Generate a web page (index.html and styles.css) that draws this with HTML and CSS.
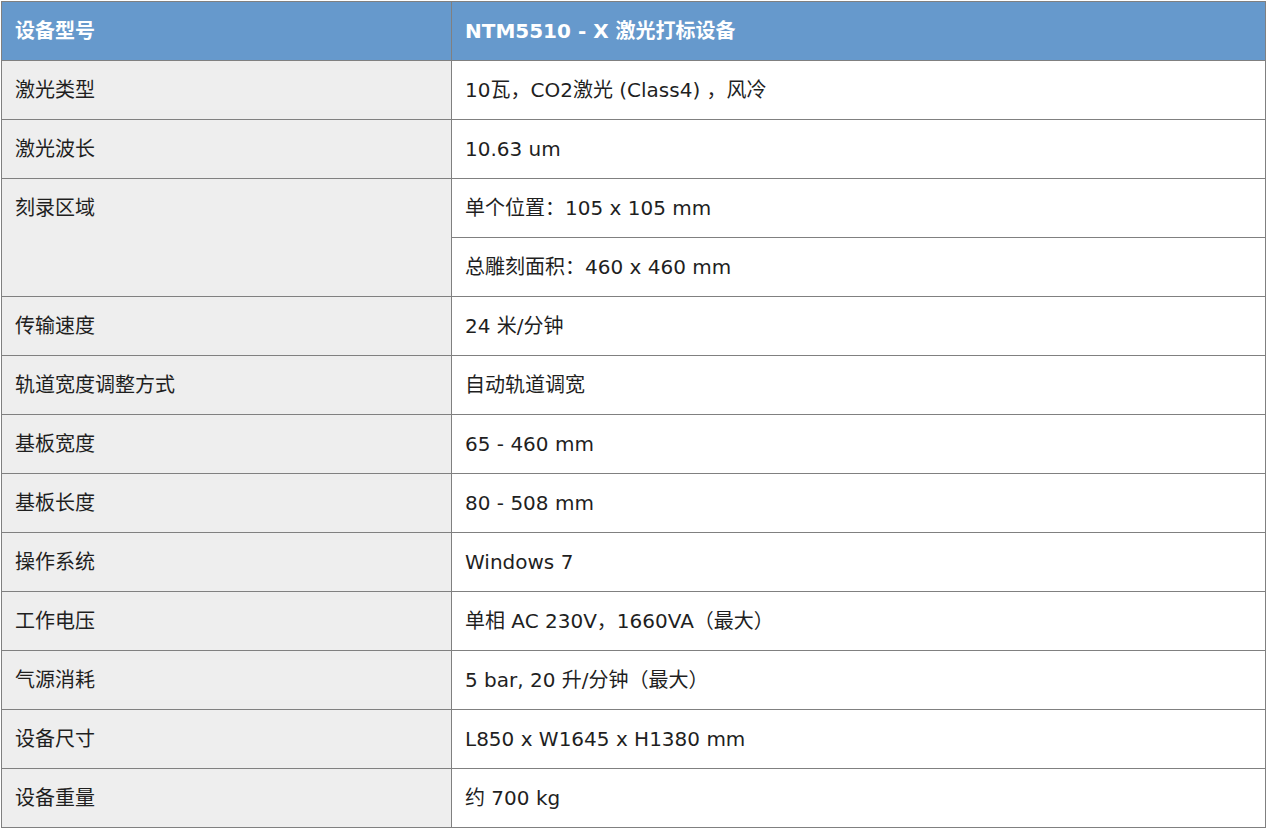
FILE: index.html
```html
<!DOCTYPE html>
<html lang="zh-CN">
<head>
<meta charset="utf-8">
<title>NTM5510 - X 激光打标设备</title>
<link rel="stylesheet" href="styles.css">
</head>
<body>
<div class="spec">
  <div class="cell head">设备型号</div>
  <div class="cell head">NTM5510 - X 激光打标设备</div>

  <div class="cell label">激光类型</div>
  <div class="cell value">10瓦，CO2激光 (Class4) ，风冷</div>

  <div class="cell label">激光波长</div>
  <div class="cell value">10.63 um</div>

  <div class="cell label span2">刻录区域</div>
  <div class="cell value">单个位置：105 x 105 mm</div>
  <div class="cell value">总雕刻面积：460 x 460 mm</div>

  <div class="cell label">传输速度</div>
  <div class="cell value">24 米/分钟</div>

  <div class="cell label">轨道宽度调整方式</div>
  <div class="cell value">自动轨道调宽</div>

  <div class="cell label">基板宽度</div>
  <div class="cell value">65 - 460 mm</div>

  <div class="cell label">基板长度</div>
  <div class="cell value">80 - 508 mm</div>

  <div class="cell label">操作系统</div>
  <div class="cell value">Windows 7</div>

  <div class="cell label">工作电压</div>
  <div class="cell value">单相 AC 230V，1660VA（最大）</div>

  <div class="cell label">气源消耗</div>
  <div class="cell value">5 bar, 20 升/分钟（最大）</div>

  <div class="cell label">设备尺寸</div>
  <div class="cell value">L850 x W1645 x H1380 mm</div>

  <div class="cell label">设备重量</div>
  <div class="cell value">约 700 kg</div>
</div>
</body>
</html>
```
FILE: styles.css
```css
html, body {
  margin: 0;
  padding: 0;
  background: #ffffff;
}

body {
  padding: 1px 0 0 1px;
  font-family: "DejaVu Sans", "Noto Sans CJK SC", sans-serif;
  font-size: 20px;
  color: #1f1f1f;
}

.spec {
  width: 1265px;
  box-sizing: border-box;
  display: grid;
  grid-template-columns: 449px 1fr;
  grid-auto-rows: 58px;
  gap: 1px;
  padding: 1px;
  background: #808080;
}

.cell {
  padding: 0 13px;
  line-height: 58px;
  white-space: nowrap;
  overflow: hidden;
}

.head {
  background: #6699cc;
  color: #ffffff;
  font-weight: bold;
}

.label {
  background: #eeeeee;
}

.value {
  background: #ffffff;
}

.span2 {
  grid-row: span 2;
}
```
